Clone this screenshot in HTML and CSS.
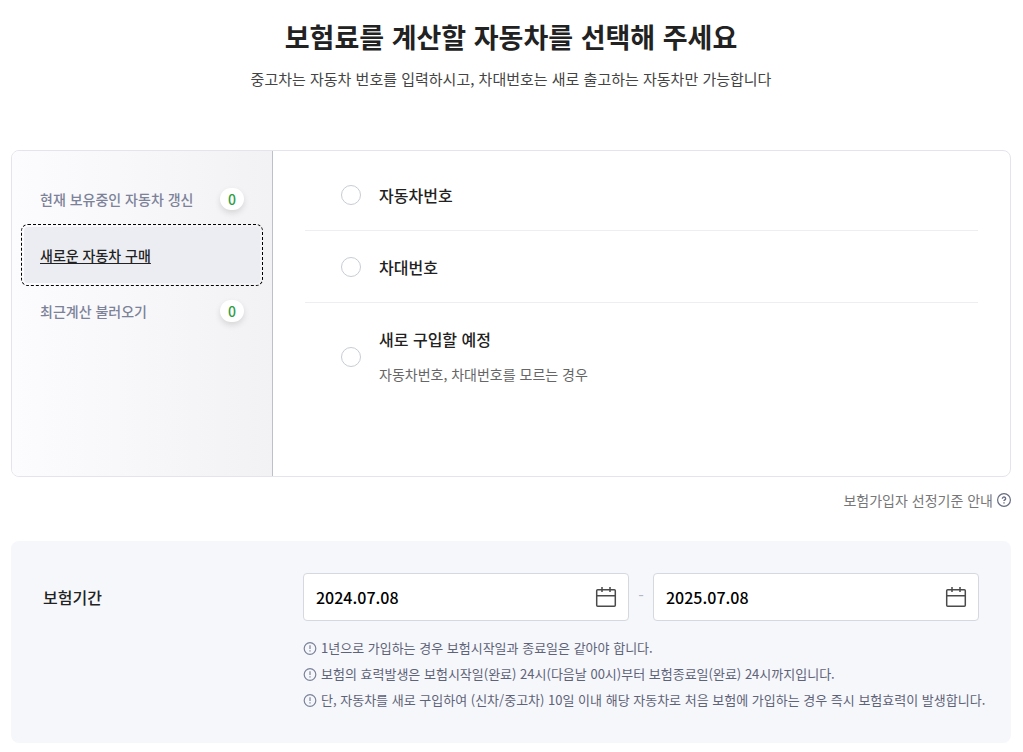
FILE: index.html
```html
<!DOCTYPE html>
<html lang="ko">
<head>
<meta charset="utf-8">
<title>자동차 보험료 계산</title>
<link rel="stylesheet" href="styles.css">
</head>
<body>
<main class="page">
  <header class="intro">
    <h1 class="title">보험료를 계산할 자동차를 선택해 주세요</h1>
    <p class="subtitle">중고차는 자동차 번호를 입력하시고, 차대번호는 새로 출고하는 자동차만 가능합니다</p>
  </header>

  <section class="selector">
    <nav class="tabs">
      <button class="tab" type="button">현재 보유중인 자동차 갱신<span class="count">0</span></button>
      <button class="tab tab-active" type="button"><span class="tab-label">새로운 자동차 구매</span></button>
      <button class="tab" type="button">최근계산 불러오기<span class="count">0</span></button>
    </nav>
    <div class="options">
      <label class="option"><input class="radio" type="radio" name="car"><span class="option-name">자동차번호</span></label>
      <label class="option"><input class="radio" type="radio" name="car"><span class="option-name">차대번호</span></label>
      <label class="option option-tall"><input class="radio" type="radio" name="car"><span class="option-text"><span class="option-name">새로 구입할 예정</span><span class="option-note">자동차번호, 차대번호를 모르는 경우</span></span></label>
    </div>
  </section>

  <div class="guide">
    <button class="guide-button" type="button">보험가입자 선정기준 안내
      <svg class="guide-icon" viewBox="0 0 14 14" aria-hidden="true"><circle cx="7" cy="7" r="6.4"/><path class="guide-mark" d="M5.4 5.7a1.6 1.6 0 1 1 2.5 1.2c-.6.4-.9.6-.9 1.2M7 9.3v1.3"/></svg>
    </button>
  </div>

  <section class="period">
    <h2 class="period-title">보험기간</h2>
    <div class="period-body">
      <div class="dates">
        <div class="date-field">
          <input class="date-input" type="text" value="2024.07.08" aria-label="보험시작일">
          <button class="date-button" type="button" aria-label="시작일 선택"><svg class="calendar" viewBox="0 0 22 22" aria-hidden="true"><rect x="1.7" y="3.7" width="18.6" height="16.6" rx="1"/><path d="M1.7 9.7h18.6M7 1v5M15 1v5"/></svg></button>
        </div>
        <span class="dash">-</span>
        <div class="date-field">
          <input class="date-input" type="text" value="2025.07.08" aria-label="보험종료일">
          <button class="date-button" type="button" aria-label="종료일 선택"><svg class="calendar" viewBox="0 0 22 22" aria-hidden="true"><rect x="1.7" y="3.7" width="18.6" height="16.6" rx="1"/><path d="M1.7 9.7h18.6M7 1v5M15 1v5"/></svg></button>
        </div>
      </div>
      <ul class="notes">
        <li class="note"><svg class="note-icon" viewBox="0 0 14 14" aria-hidden="true"><circle cx="7" cy="7.5" r="5.8"/><path d="M7 4.3v3.8M7 9.2v1.4"/></svg>1년으로 가입하는 경우 보험시작일과 종료일은 같아야 합니다.</li>
        <li class="note"><svg class="note-icon" viewBox="0 0 14 14" aria-hidden="true"><circle cx="7" cy="7.5" r="5.8"/><path d="M7 4.3v3.8M7 9.2v1.4"/></svg>보험의 효력발생은 보험시작일(완료) 24시(다음날 00시)부터 보험종료일(완료) 24시까지입니다.</li>
        <li class="note"><svg class="note-icon" viewBox="0 0 14 14" aria-hidden="true"><circle cx="7" cy="7.5" r="5.8"/><path d="M7 4.3v3.8M7 9.2v1.4"/></svg>단, 자동차를 새로 구입하여 (신차/중고차) 10일 이내 해당 자동차로 처음 보험에 가입하는 경우 즉시 보험효력이 발생합니다.</li>
      </ul>
    </div>
  </section>
</main>
</body>
</html>
```
FILE: styles.css
```css
* { box-sizing: border-box; }
body { margin: 0; background: #fff; color: #222; font-family: "Noto Sans CJK KR", sans-serif; font-size: 16px; }
button, input { font: inherit; color: inherit; }
button { border: 0; background: none; padding: 0; cursor: pointer; }
.page { padding: 16px 12px 8px 11px; }
.intro { text-align: center; }
.title { margin: 0; font-size: 27px; line-height: 42px; font-weight: 700; }
.subtitle { margin: 9px 0 0; font-size: 15px; line-height: 24px; color: #444; }
.selector { display: flex; margin-top: 59px; min-height: 327px; border: 1px solid #e4e5eb; border-radius: 8px; overflow: hidden; }
.tabs { flex: 0 0 261px; padding: 20px 12px; border-right: 1px solid #bcc0cc; background: linear-gradient(90deg, #fcfcfe, #f2f2f4); }
.tab { display: flex; align-items: center; justify-content: space-between; width: 100%; height: 56px; padding: 0 16px; font-size: 14px; font-weight: 500; color: #7c8299; }
.tab-active { border-radius: 4px; background: #ecedf3; color: #222; outline: 1px dashed #000; outline-offset: 2px; }
.tab-label { text-decoration: underline; text-underline-offset: 2px; }
.count { width: 24px; height: 22px; border-radius: 11px; background: #fff; box-shadow: 0 3px 6px rgba(0, 0, 0, .12); color: #2f9e44; line-height: 22px; text-align: center; }
.options { flex: 1; padding: 8px 32px; }
.option { display: flex; align-items: center; gap: 18px; height: 72px; padding-left: 36px; border-bottom: 1px solid #ededf2; }
.option-tall { height: 108px; border-bottom: 0; }
.radio { appearance: none; width: 20px; height: 20px; margin: 0; border: 1px solid #c8ccd4; border-radius: 50%; background: #fff; }
.radio:checked { border: 6px solid #2f9e44; }
.option-name { display: block; font-size: 16px; line-height: 24px; font-weight: 500; }
.option-note { display: block; margin-top: 12px; font-size: 14px; line-height: 22px; color: #666; }
.option-text { padding-bottom: 2px; }
.guide { display: flex; justify-content: flex-end; margin-top: 12px; }
.guide-button { display: flex; align-items: center; gap: 4px; font-size: 14px; line-height: 22px; color: #777; }
.guide-icon { width: 14px; height: 14px; fill: none; stroke: #666b80; stroke-width: 1.2; }
.guide-mark { stroke-width: 1.4; }
.period { display: flex; margin-top: 30px; padding: 32px 32px 30px; border-radius: 8px; background: #f5f7fb; }
.period-title { flex: 0 0 260px; margin: 0; font-size: 16px; line-height: 48px; font-weight: 500; }
.period-body { flex: 1; min-width: 0; }
.dates { display: flex; }
.date-field { flex: 1; display: flex; align-items: center; height: 48px; padding: 0 11px 0 12px; border: 1px solid #d5d8e0; border-radius: 4px; background: #fff; }
.date-input { flex: 1; min-width: 0; padding: 0; border: 0; outline: 0; background: none; color: #000; font-weight: 500; }
.date-button { display: flex; }
.calendar { width: 22px; height: 22px; fill: none; stroke: #4a4a4a; stroke-width: 1.5; }
.dash { width: 24px; line-height: 44px; text-align: center; color: #b4b8c4; }
.notes { margin: 14px -16px 0 0; padding: 0; list-style: none; }
.note { display: flex; align-items: center; gap: 4px; font-size: 13px; line-height: 26px; color: #5f6378; }
.note-icon { flex: none; width: 14px; height: 14px; fill: none; stroke: #7c8299; stroke-width: 1.2; }
```
